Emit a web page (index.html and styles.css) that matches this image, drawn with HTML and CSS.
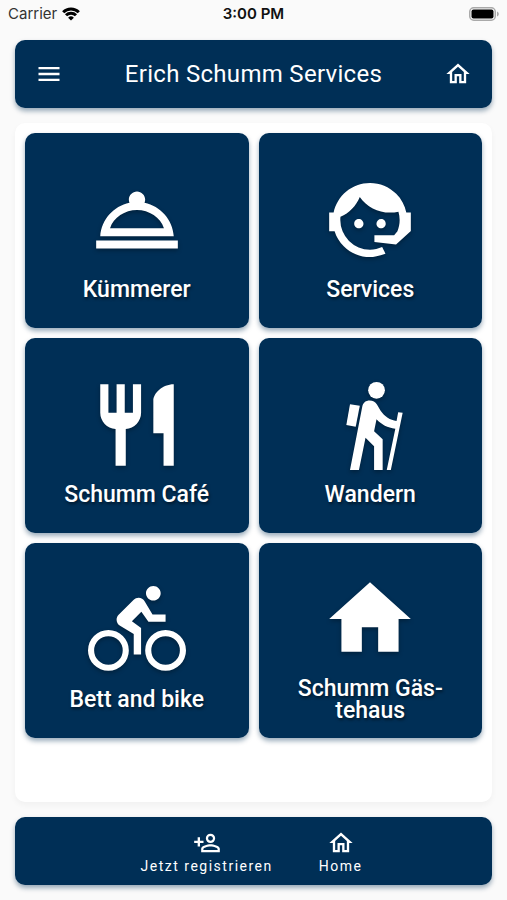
FILE: index.html
```html
<!DOCTYPE html>
<html lang="de">
<head>
    <meta charset="UTF-8">
    <meta name="viewport" content="width=device-width, initial-scale=1.0">
    <title>Erich Schumm Services</title>
    <link rel="stylesheet" href="styles.css">
</head>
<body>
    <div class="status-bar">
        <div class="carrier">
            <span>Carrier</span>
            <svg class="wifi" viewBox="0 0 18 14" aria-hidden="true">
                <path d="M1.2 5.2a11 11 0 0 1 15.6 0M4 8.2a7.1 7.1 0 0 1 10 0"/>
                <path class="wifi-dot" d="M9 13.6L6.1 10.7a4.1 4.1 0 0 1 5.8 0z"/>
            </svg>
        </div>
        <span class="time">3:00 PM</span>
        <svg class="battery" viewBox="0 0 30 14" aria-hidden="true">
            <rect x="0.75" y="0.75" width="25.5" height="12.5" rx="4" fill="#fafafa" stroke="#a9a9a9" stroke-width="1.5"/>
            <rect x="2.5" y="2.5" width="22" height="9" rx="2"/>
            <path d="M28 4.5c2.4 1 2.4 4 0 5z" fill="#a9a9a9"/>
        </svg>
    </div>

    <header class="bar header">
        <button class="icon-button" aria-label="Menü">
            <svg class="icon" viewBox="0 0 24 24"><path d="M3 6h18v2H3V6m0 5h18v2H3v-2m0 5h18v2H3v-2z"/></svg>
        </button>
        <h1>Erich Schumm Services</h1>
        <a class="icon-button" href="#" aria-label="Home">
            <svg class="icon" viewBox="0 0 24 24"><path d="M12 5.69l5 4.5V18h-2v-6H9v6H7v-7.81l5-4.5M12 3L2 12h3v8h6v-6h2v6h6v-8h3"/></svg>
        </a>
    </header>

    <main class="panel">
        <a class="tile" href="#">
            <svg class="tile-icon" viewBox="0 0 24 24"><path fill-rule="evenodd" d="M2 17h20v2H2zM13.84 7.79c.1-.24.16-.51.16-.79 0-1.1-.9-2-2-2s-2 .9-2 2c0 .28.06.55.16.79C6.25 8.6 3.27 11.93 3 16h18c-.27-4.07-3.25-7.4-7.16-8.21zM12 9.58c2.95 0 5.77 1.83 6.6 4.42H5.4C6.23 11.41 9.05 9.58 12 9.58z"/></svg>
            <span>Kümmerer</span>
        </a>
        <a class="tile" href="#">
            <svg class="tile-icon" viewBox="0 0 24 24"><path d="M18.72,14.76C19.07,13.91 19.26,13 19.26,12C19.26,11.28 19.15,10.59 18.96,9.95C18.31,10.1 17.63,10.18 16.92,10.18C13.86,10.18 11.15,8.67 9.5,6.34C8.61,8.5 6.91,10.26 4.77,11.22C4.73,11.47 4.73,11.74 4.73,12A7.27,7.27 0 0,0 12,19.27C13.05,19.27 14.06,19.04 14.97,18.63C15.54,19.72 15.8,20.26 15.78,20.26C14.14,20.81 12.87,21.08 12,21.08C9.58,21.08 7.27,20.13 5.57,18.42C4.53,17.38 3.76,16.11 3.33,14.73H2V10.18H3.09C3.93,6.04 7.6,2.92 12,2.92C14.4,2.92 16.71,3.87 18.42,5.58C19.69,6.84 20.54,8.45 20.89,10.18H22V14.73H21.94L18.38,18L13.08,17.4V15.73H17.91L18.72,14.76M9.27,11.77C9.57,11.77 9.86,11.89 10.07,12.11C10.28,12.32 10.4,12.61 10.4,12.91C10.4,13.21 10.28,13.5 10.07,13.71C9.86,13.92 9.57,14.04 9.27,14.04C8.64,14.04 8.13,13.54 8.13,12.91C8.13,12.28 8.64,11.77 9.27,11.77M14.72,11.77C15.35,11.77 15.85,12.28 15.85,12.91C15.85,13.54 15.35,14.04 14.72,14.04C14.09,14.04 13.58,13.54 13.58,12.91A1.14,1.14 0 0,1 14.72,11.77Z"/></svg>
            <span>Services</span>
        </a>
        <a class="tile" href="#">
            <svg class="tile-icon" viewBox="0 0 24 24"><path d="M11 9H9V2H7v7H5V2H3v7c0 2.12 1.66 3.84 3.75 3.97V22h2.5v-9.03C11.34 12.84 13 11.12 13 9V2h-2v7zm5-3v8h2.5v8H21V2c-2.76 0-5 2.24-5 4z"/></svg>
            <span>Schumm Café</span>
        </a>
        <a class="tile" href="#">
            <svg class="tile-icon" viewBox="0 0 24 24">
                <circle cx="13.6" cy="3.5" r="2.05"/>
                <path d="M7.1 6.9L9.5 7.3L8.5 12.4L6.2 12z"/>
                <path d="M7.1 23L10.1 7.5C10.3 6.5 11 6 11.9 6C12.7 6 13.3 6.3 13.7 7L14.6 8.5C15.6 9.9 16.9 10.8 18.5 11L18.9 8.85L20 9L17.1 23H16.1L18.2 12.9C16.3 12.7 14.8 11.9 13.6 10.6L13 13.5L15.1 15.5V23H13V17.2L10.9 15.1L9.3 23z"/>
            </svg>
            <span>Wandern</span>
        </a>
        <a class="tile" href="#">
            <svg class="tile-icon" viewBox="0 0 24 24"><path d="M5,20.5A3.5,3.5 0 0,1 1.5,17A3.5,3.5 0 0,1 5,13.5A3.5,3.5 0 0,1 8.5,17A3.5,3.5 0 0,1 5,20.5M5,12A5,5 0 0,0 0,17A5,5 0 0,0 5,22A5,5 0 0,0 10,17A5,5 0 0,0 5,12M14.8,10H19V8.2H15.8L13.86,4.93C13.57,4.43 13,4.1 12.4,4.1C11.93,4.1 11.5,4.29 11.2,4.6L7.5,8.29C7.19,8.6 7,9 7,9.5C7,10.13 7.33,10.66 7.85,10.97L11.2,13V18H13V11.5L10.75,9.85L13.07,7.5M19,20.5A3.5,3.5 0 0,1 15.5,17A3.5,3.5 0 0,1 19,13.5A3.5,3.5 0 0,1 22.5,17A3.5,3.5 0 0,1 19,20.5M19,12A5,5 0 0,0 14,17A5,5 0 0,0 19,22A5,5 0 0,0 24,17A5,5 0 0,0 19,12M16,4.8C17,4.8 17.8,4 17.8,3C17.8,2 17,1.2 16,1.2C15,1.2 14.2,2 14.2,3C14.2,4 15,4.8 16,4.8Z"/></svg>
            <span>Bett and bike</span>
        </a>
        <a class="tile" href="#">
            <svg class="tile-icon" viewBox="0 0 24 24"><path d="M10,20V14H14V20H19V12H22L12,3L2,12H5V20H10Z"/></svg>
            <span>Schumm Gäs-<br>tehaus</span>
        </a>
    </main>

    <nav class="bar footer">
        <a class="nav-item" href="#">
            <svg class="icon" viewBox="0 0 24 24"><path d="M15,4A4,4 0 0,0 11,8A4,4 0 0,0 15,12A4,4 0 0,0 19,8A4,4 0 0,0 15,4M15,5.9C16.16,5.9 17.1,6.84 17.1,8C17.1,9.16 16.16,10.1 15,10.1A2.1,2.1 0 0,1 12.9,8A2.1,2.1 0 0,1 15,5.9M4,7V10H1V12H4V15H6V12H9V10H6V7H4M15,13C12.33,13 7,14.33 7,17V20H23V17C23,14.33 17.67,13 15,13M15,14.9C17.97,14.9 21.1,16.36 21.1,17V18.1H8.9V17C8.9,16.36 12,14.9 15,14.9Z"/></svg>
            <span>Jetzt registrieren</span>
        </a>
        <a class="nav-item" href="#">
            <svg class="icon" viewBox="0 0 24 24"><path d="M12 5.69l5 4.5V18h-2v-6H9v6H7v-7.81l5-4.5M12 3L2 12h3v8h6v-6h2v6h6v-8h3"/></svg>
            <span>Home</span>
        </a>
    </nav>
</body>
</html>
```
FILE: styles.css
```css
* {
    box-sizing: border-box;
}

body {
    font-family: Roboto, sans-serif;
    margin: 0;
    padding: 0 15px 15px;
    min-height: 100vh;
    display: flex;
    flex-direction: column;
    gap: 15px;
    background: #fafafa;
}

a {
    color: inherit;
    text-decoration: none;
}

svg {
    display: block;
    fill: currentColor;
}

.status-bar {
    display: grid;
    grid-template-columns: 1fr auto 1fr;
    align-items: center;
    height: 25px;
    margin: 0 -7px;
    padding-top: 2px;
    font-family: Inter, sans-serif;
    font-size: 15px;
    color: #111;
}

.carrier {
    display: flex;
    align-items: center;
    gap: 5px;
    color: #333;
}

.wifi {
    width: 18px;
    height: 14px;
    fill: none;
    stroke: #000;
    stroke-width: 3;
}

.wifi-dot {
    fill: #000;
    stroke: none;
}

.time {
    font-weight: 600;
}

.battery {
    width: 30px;
    height: 14px;
    justify-self: end;
    color: #000;
}

.bar {
    display: flex;
    align-items: center;
    height: 68px;
    border-radius: 10px;
    background: #002f56;
    color: #fff;
    box-shadow: 0 3px 5px rgba(0, 47, 86, 0.4);
}

.header {
    justify-content: space-between;
    padding: 0 20px;
}

.header h1 {
    margin: 0;
    font-size: 24px;
    font-weight: 400;
    letter-spacing: 0.0125em;
}

.icon-button {
    padding: 0;
    border: none;
    background: none;
    color: inherit;
    cursor: pointer;
}

.icon {
    width: 28px;
    height: 28px;
}

.panel {
    flex: 1;
    display: grid;
    grid-template-columns: 1fr 1fr;
    grid-auto-rows: 195px;
    gap: 10px;
    padding: 10px;
    border-radius: 10px;
    background: #fff;
    box-shadow: 0 3px 6px rgba(0, 0, 0, 0.04);
}

.tile {
    display: flex;
    flex-direction: column;
    align-items: center;
    justify-content: center;
    gap: 10px;
    padding-top: 10px;
    border-radius: 10px;
    background: #002f56;
    color: #fff;
    font-size: 23px;
    font-weight: 500;
    line-height: 22px;
    text-align: center;
    text-shadow: 1px 2px 3px rgba(0, 0, 0, 0.5);
    box-shadow: 0 3px 5px rgba(0, 47, 86, 0.4);
}

.tile-icon {
    width: 98px;
    height: 98px;
    filter: drop-shadow(0 2px 2px rgba(0, 0, 0, 0.3));
}

.footer {
    justify-content: center;
    gap: 46px;
    padding: 2px 4px 0 0;
}

.nav-item {
    display: flex;
    flex-direction: column;
    align-items: center;
    font-size: 14px;
    line-height: 18px;
    letter-spacing: 1.5px;
}
```
